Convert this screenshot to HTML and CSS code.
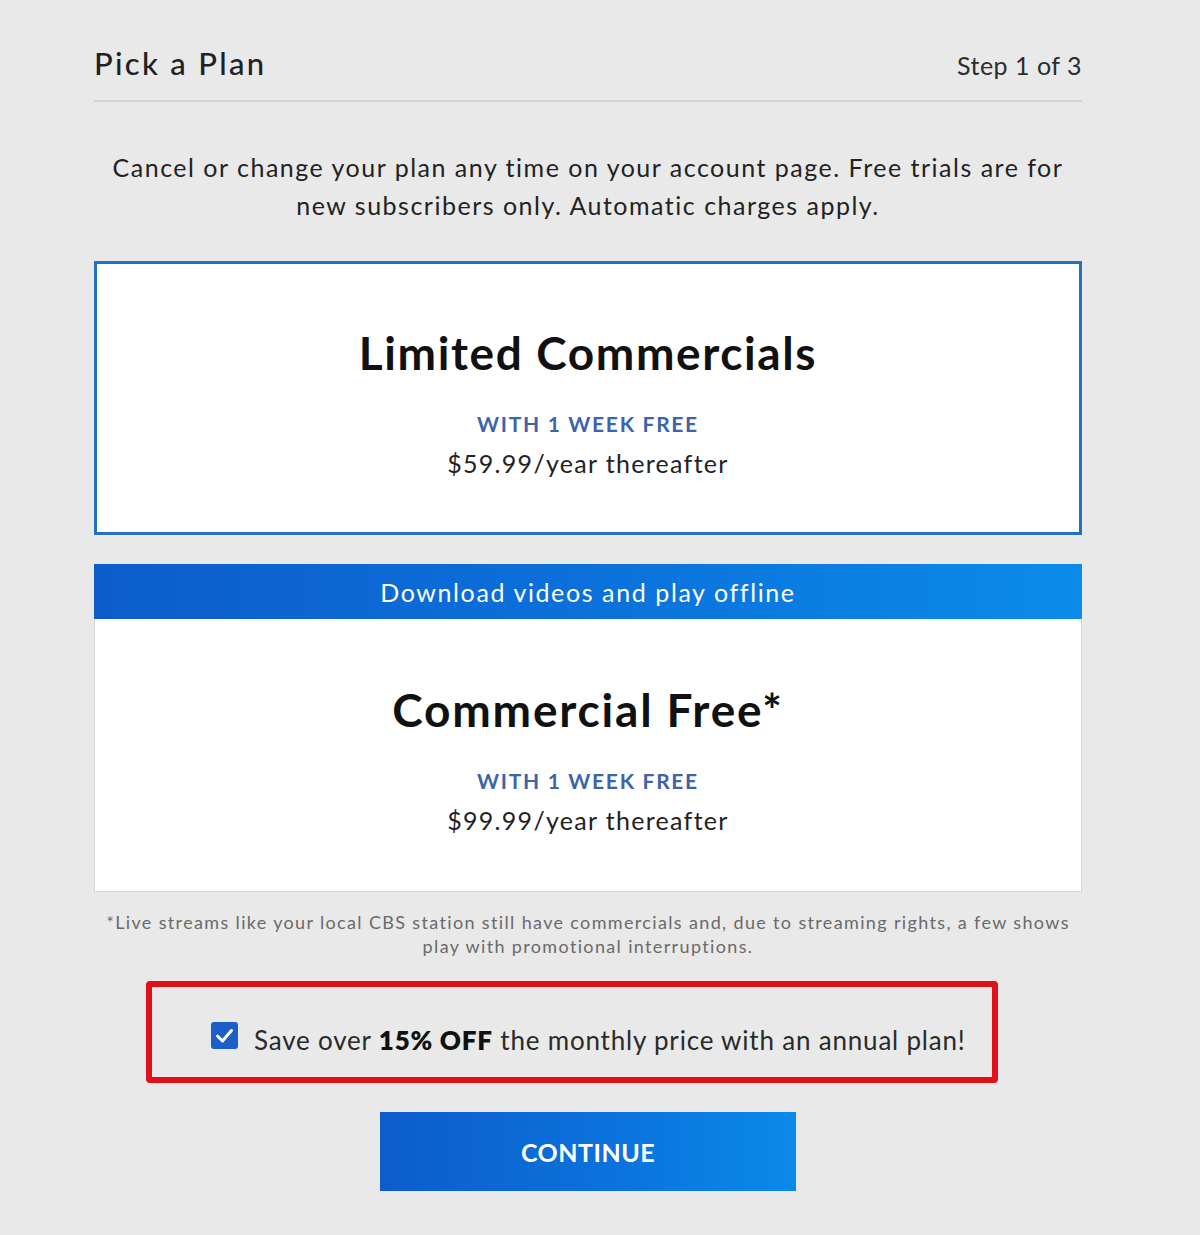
FILE: index.html
```html
<!DOCTYPE html>
<html>
<head>
<meta charset="utf-8">
<link rel="stylesheet" href="styles.css">
</head>
<body>
<div class="page">
  <header class="head">
    <h1 class="head-title">Pick a Plan</h1>
    <span class="head-step">Step 1 of 3</span>
  </header>
  <p class="intro">Cancel or change your plan any time on your account page. Free trials are for new subscribers only. Automatic charges apply.</p>

  <div class="plan plan-selected">
    <h2 class="plan-name">Limited Commercials</h2>
    <div class="plan-trial">WITH 1 WEEK FREE</div>
    <div class="plan-price">$59.99/year thereafter</div>
  </div>

  <div class="plan-group">
    <div class="banner">Download videos and play offline</div>
    <div class="plan plan-plain">
      <h2 class="plan-name">Commercial Free*</h2>
      <div class="plan-trial">WITH 1 WEEK FREE</div>
      <div class="plan-price">$99.99/year thereafter</div>
    </div>
  </div>

  <p class="note">*Live streams like your local CBS station still have commercials and, due to streaming rights, a few shows play with promotional interruptions.</p>

  <div class="annual">
    <span class="check">
      <svg width="27" height="27" viewBox="0 0 27 27"><rect x="0" y="0" width="27" height="27" rx="3" fill="#1b5dc9"/><path d="M6.5 14 L11.5 19 L20.5 8.5" fill="none" stroke="#fff" stroke-width="3" stroke-linecap="round" stroke-linejoin="round"/></svg>
    </span>
    <span class="annual-text">Save over <b>15% OFF</b> the monthly price with an annual plan!</span>
  </div>

  <div class="actions">
    <button class="continue">CONTINUE</button>
  </div>
</div>
</body>
</html>
```
FILE: styles.css
```css
html, body { margin: 0; padding: 0; }
body {
  background: #e9e9e9;
  font-family: "Lato", "Noto Sans", sans-serif;
  color: #1c1c1c;
  width: 1200px;
  height: 1235px;
  overflow: hidden;
}
.page {
  width: 988px;
  margin: 0 0 0 94px;
  padding-top: 44px;
}
.head {
  display: flex;
  justify-content: space-between;
  align-items: baseline;
  border-bottom: 2px solid #d3d3d3;
  padding-bottom: 18px;
}
.head-title {
  margin: 0;
  font-size: 31px;
  font-weight: 500;
  color: #1e2226;
  letter-spacing: 2.3px;
}
.head-step {
  font-size: 25px;
  color: #2a2d30;
  letter-spacing: 0.5px;
}
.intro {
  margin: 46px 0 0;
  text-align: center;
  font-size: 25px;
  line-height: 38px;
  color: #222;
  padding: 0 12px;
  letter-spacing: 1.5px;
}
.plan {
  background: #fff;
  text-align: center;
  box-sizing: border-box;
}
.plan-selected {
  margin-top: 37px;
  height: 274px;
  border: 3px solid #2470c4;
  padding-top: 63px;
}
.plan-group {
  margin-top: 29px;
}
.banner {
  height: 55px;
  background: linear-gradient(90deg, #0d5ccc 0%, #0b73dc 55%, #0a8ceb 100%);
  color: #fff;
  text-align: center;
  font-size: 25px;
  line-height: 57px;
  letter-spacing: 1.6px;
}
.plan-plain {
  height: 273px;
  border: 1px solid #d6d6d6;
  border-top: none;
  padding-top: 65px;
}
.plan-name {
  margin: 0;
  font-size: 46px;
  font-weight: 700;
  color: #111;
  line-height: 52px;
  letter-spacing: 1.6px;
}
.plan-plain .plan-name { letter-spacing: 1.8px; }
.plan-trial {
  margin-top: 31px;
  font-size: 21px;
  font-weight: 700;
  color: #3d64ab;
  letter-spacing: 1.7px;
  line-height: 28px;
}
.plan-price {
  margin-top: 9px;
  font-size: 25px;
  color: #222;
  line-height: 32px;
  letter-spacing: 1.3px;
}
.note {
  margin: 18px 0 0;
  text-align: center;
  font-size: 18px;
  line-height: 24px;
  color: #6a6a6a;
  padding: 0 8px;
  letter-spacing: 1.35px;
}
.annual {
  margin: 23px 0 0 52px;
  width: 852px;
  height: 102px;
  box-sizing: border-box;
  border: 6px solid #e1111a;
  border-radius: 4px;
  display: flex;
  align-items: center;
  padding-left: 59px;
  padding-top: 16px;
  gap: 16px;
}
.check { display: flex; margin-top: -9px; }
.annual-text {
  font-size: 26px;
  color: #2a2a2a;
  letter-spacing: 0.8px;
}
.annual-text b { color: #111; font-weight: 800; }
.actions {
  display: flex;
  justify-content: flex-start;
  margin-top: 29px;
  padding-left: 286px;
}
.continue {
  width: 416px;
  height: 79px;
  border: none;
  background: linear-gradient(90deg, #0d5ccc 0%, #0b74de 60%, #0a8aea 100%);
  color: #fff;
  font-family: "Lato", "Noto Sans", sans-serif;
  font-size: 25px;
  font-weight: 700;
  letter-spacing: 0.5px;
}
```
